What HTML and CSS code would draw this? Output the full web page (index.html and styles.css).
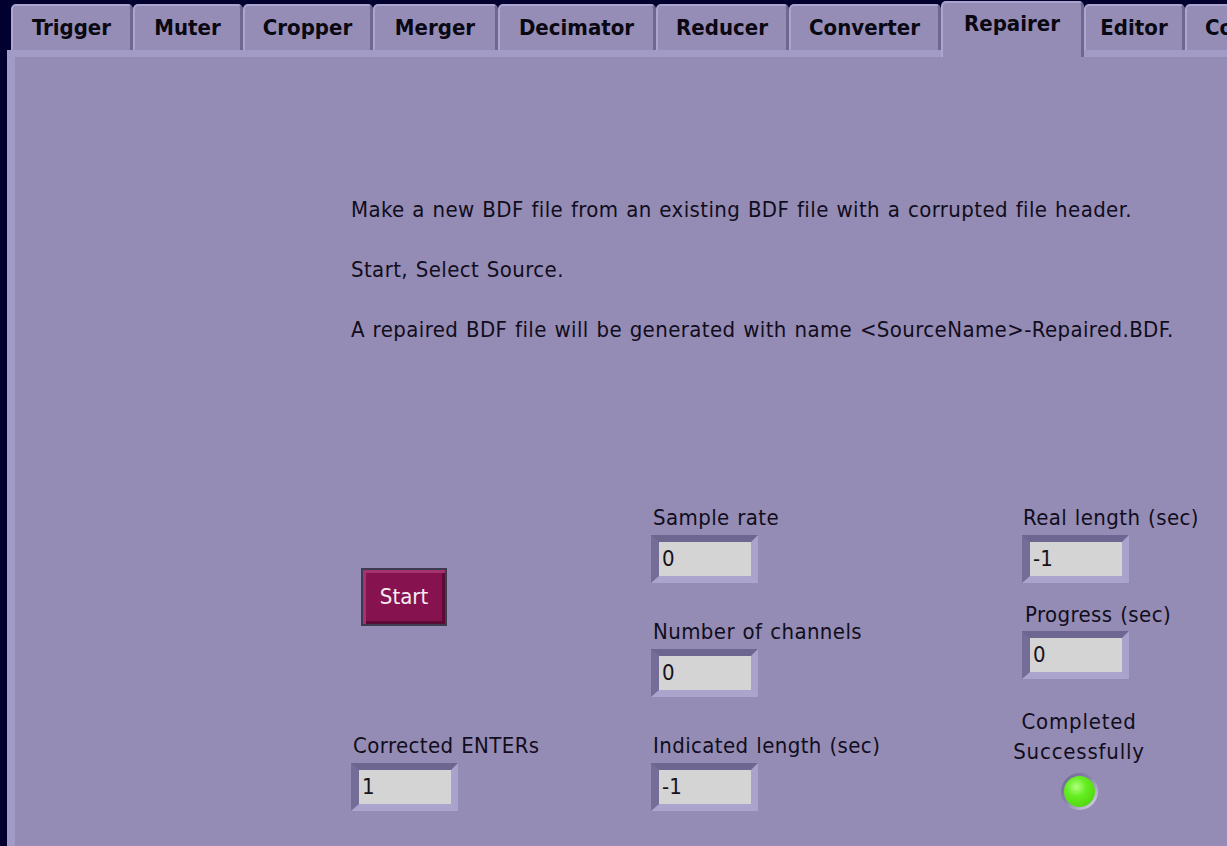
FILE: index.html
```html
<!DOCTYPE html>
<html lang="en">
<head>
<meta charset="utf-8">
<title>BDF Tools - Repairer</title>
<link rel="stylesheet" href="styles.css">
</head>
<body>
<div class="window">
  <nav class="tabbar">
    <div class="tab tab-trigger">Trigger</div>
    <div class="tab tab-muter">Muter</div>
    <div class="tab tab-cropper">Cropper</div>
    <div class="tab tab-merger">Merger</div>
    <div class="tab tab-decimator">Decimator</div>
    <div class="tab tab-reducer">Reducer</div>
    <div class="tab tab-converter">Converter</div>
    <div class="tab tab-repairer is-active">Repairer</div>
    <div class="tab tab-editor">Editor</div>
    <div class="tab tab-more">Co</div>
  </nav>
  <main class="panel">
    <section class="intro">
      <p>Make a new BDF file from an existing BDF file with a corrupted file header.</p>
      <p>Start, Select Source.</p>
      <p>A repaired BDF file will be generated with name &lt;SourceName&gt;-Repaired.BDF.</p>
    </section>
    <section class="controls">
      <div class="col col-actions">
        <button class="start-btn" type="button">Start</button>
        <div class="group group-entries">
          <div class="label">Corrected ENTERs</div>
          <div class="field">1</div>
        </div>
      </div>
      <div class="col col-info">
        <div class="group">
          <div class="label">Sample rate</div>
          <div class="field">0</div>
        </div>
        <div class="group">
          <div class="label">Number of channels</div>
          <div class="field">0</div>
        </div>
        <div class="group">
          <div class="label">Indicated length (sec)</div>
          <div class="field">-1</div>
        </div>
      </div>
      <div class="col col-status">
        <div class="group">
          <div class="label label-real">Real length (sec)</div>
          <div class="field">-1</div>
        </div>
        <div class="group group-progress">
          <div class="label label-progress">Progress (sec)</div>
          <div class="field">0</div>
        </div>
        <div class="status">
          <div class="status-text">Completed<br>Successfully</div>
          <div class="led"><span class="led-lamp"></span></div>
        </div>
      </div>
    </section>
  </main>
</div>
</body>
</html>
```

FILE: styles.css
```css
* { box-sizing: border-box; }

html, body {
  margin: 0;
  padding: 0;
}

body {
  width: 1227px;
  height: 846px;
  overflow: hidden;
  background: #01002e;
  font-family: "DejaVu Sans Condensed", "DejaVu Sans", sans-serif;
  font-size: 22px;
  color: #110d1d;
}

.window {
  height: 100%;
  display: flex;
  flex-direction: column;
}

/* ---------- tabs ---------- */
.tabbar {
  flex: none;
  height: 50px;
  display: flex;
  align-items: flex-start;
  padding: 4px 0 0 11px;
}

.tab {
  flex: none;
  height: 46px;
  background: #958db6;
  border-top: 2px solid #aba4ce;
  border-left: 2px solid #aca5cf;
  border-right: 3px solid #6e678f;
  border-radius: 5px 5px 0 0;
  font-weight: bold;
  line-height: 43px;
  text-align: center;
  color: #0a0812;
  white-space: nowrap;
  overflow: hidden;
}

.tab.is-active {
  position: relative;
  z-index: 1;
  margin-top: -3px;
  height: 56px;
  line-height: 41px;
  background: #948cb4;
}

.tab-trigger   { width: 122px; }
.tab-muter     { width: 110px; }
.tab-cropper   { width: 130px; }
.tab-merger    { width: 125px; }
.tab-decimator { width: 158px; }
.tab-reducer   { width: 133px; }
.tab-converter { width: 152px; }
.tab-repairer  { width: 143px; }
.tab-editor    { width: 101px; }
.tab-more      { width: 42px; text-align: left; padding-left: 18px; border-right: 0; border-radius: 5px 0 0 0; }

/* ---------- panel ---------- */
.panel {
  flex: 1;
  margin-left: 7px;
  background: #948cb4;
  border-top: 7px solid #a29bc5;
  border-left: 8px solid #a29bc5;
  padding-left: 336px;
  letter-spacing: 0.4px;
  word-spacing: 1px;
}

.intro {
  padding-top: 138px;
}

.intro p {
  margin: 0 0 30px;
  line-height: 30px;
  white-space: nowrap;
}

.intro p:last-child { margin-bottom: 0; }

.controls {
  display: flex;
  margin-top: 161px;
}

.col { flex: none; display: flex; flex-direction: column; align-items: flex-start; }
.col-actions { width: 300px; }
.col-info    { width: 371px; }
.col-status  { width: 130px; }

.group + .group { margin-top: 37px; }

.label {
  line-height: 24px;
  margin-bottom: 5px;
  padding-left: 2px;
  white-space: nowrap;
}

.label-real { padding-left: 1px; }
.label-progress { padding-left: 3px; }

.field {
  width: 107px;
  height: 48px;
  border-style: solid;
  border-width: 7px 7px 7px 8px;
  border-color: #6d6691 #a9a2cc #aba4cd #746d98;
  background: #d4d4d4;
  background-clip: padding-box;
  line-height: 34px;
  padding-left: 3px;
  color: #15121c;
  letter-spacing: 0;
}

/* ---------- start button ---------- */
.start-btn {
  display: block;
  margin: 62px 0 0 10px;
  width: 86px;
  height: 58px;
  padding: 0;
  border: 2px solid #3e3a50;
  background: #86134f;
  box-shadow: inset 3px 3px 0 #a3346f, inset -3px -3px 0 #5c0b37;
  color: #f6ecf2;
  font-family: inherit;
  font-size: 22px;
  line-height: 54px;
  cursor: pointer;
}

.group-entries { margin-top: 108px; }
.col-status .group-progress { margin-top: 20px; }
.group-progress .field { margin-top: -1px; }

/* ---------- status ---------- */
.status {
  width: 114px;
  margin-top: 28px;
  display: flex;
  flex-direction: column;
  align-items: center;
}

.status-text {
  line-height: 30px;
  text-align: center;
  white-space: nowrap;
  letter-spacing: 0.8px;
}

.led {
  margin-top: 6px;
  width: 37px;
  height: 37px;
  border-radius: 50%;
  padding: 3px;
  background: linear-gradient(135deg, #6c6590 0%, #8a83ad 45%, #e2dfee 100%);
}

.led-lamp {
  display: block;
  width: 31px;
  height: 31px;
  border-radius: 50%;
  background: radial-gradient(circle at 40% 35%, #b2ff80 0%, #66ee22 35%, #46cc05 100%);
}
```
